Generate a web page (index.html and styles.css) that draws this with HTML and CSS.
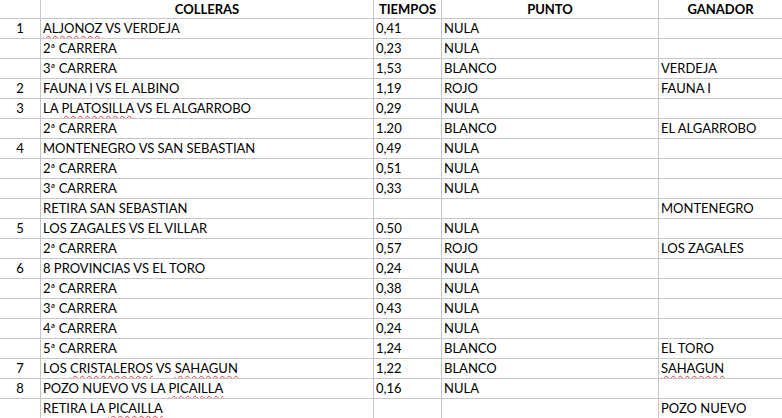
FILE: index.html
```html
<!DOCTYPE html>
<html>
<head>
<meta charset="utf-8">
<link rel="stylesheet" href="styles.css">
</head>
<body>
<div class="sheet">
  <div class="c"></div><div class="c h">COLLERAS</div><div class="c h">TIEMPOS</div><div class="c h">PUNTO</div><div class="c h">GANADOR</div>

  <div class="c n">1</div><div class="c"><span class="sp">ALJONOZ</span> VS VERDEJA</div><div class="c">0,41</div><div class="c">NULA</div><div class="c"></div>
  <div class="c n"></div><div class="c">2ª CARRERA</div><div class="c">0,23</div><div class="c">NULA</div><div class="c"></div>
  <div class="c n"></div><div class="c">3ª CARRERA</div><div class="c">1,53</div><div class="c">BLANCO</div><div class="c">VERDEJA</div>
  <div class="c n">2</div><div class="c">FAUNA I VS EL ALBINO</div><div class="c">1,19</div><div class="c">ROJO</div><div class="c">FAUNA I</div>
  <div class="c n">3</div><div class="c">LA <span class="sp">PLATOSILLA</span> VS EL ALGARROBO</div><div class="c">0,29</div><div class="c">NULA</div><div class="c"></div>
  <div class="c n"></div><div class="c">2ª CARRERA</div><div class="c">1.20</div><div class="c">BLANCO</div><div class="c">EL ALGARROBO</div>
  <div class="c n">4</div><div class="c">MONTENEGRO VS SAN SEBASTIAN</div><div class="c">0,49</div><div class="c">NULA</div><div class="c"></div>
  <div class="c n"></div><div class="c">2ª CARRERA</div><div class="c">0,51</div><div class="c">NULA</div><div class="c"></div>
  <div class="c n"></div><div class="c">3ª CARRERA</div><div class="c">0,33</div><div class="c">NULA</div><div class="c"></div>
  <div class="c n"></div><div class="c">RETIRA SAN SEBASTIAN</div><div class="c"></div><div class="c"></div><div class="c">MONTENEGRO</div>
  <div class="c n">5</div><div class="c">LOS ZAGALES VS EL VILLAR</div><div class="c">0.50</div><div class="c">NULA</div><div class="c"></div>
  <div class="c n"></div><div class="c">2ª CARRERA</div><div class="c">0,57</div><div class="c">ROJO</div><div class="c">LOS ZAGALES</div>
  <div class="c n">6</div><div class="c">8 PROVINCIAS VS EL TORO</div><div class="c">0,24</div><div class="c">NULA</div><div class="c"></div>
  <div class="c n"></div><div class="c">2ª CARRERA</div><div class="c">0,38</div><div class="c">NULA</div><div class="c"></div>
  <div class="c n"></div><div class="c">3ª CARRERA</div><div class="c">0,43</div><div class="c">NULA</div><div class="c"></div>
  <div class="c n"></div><div class="c">4ª CARRERA</div><div class="c">0,24</div><div class="c">NULA</div><div class="c"></div>
  <div class="c n"></div><div class="c">5ª CARRERA</div><div class="c">1,24</div><div class="c">BLANCO</div><div class="c">EL TORO</div>
  <div class="c n">7</div><div class="c">LOS <span class="sp">CRISTALEROS</span> VS <span class="sp">SAHAGUN</span></div><div class="c">1,22</div><div class="c">BLANCO</div><div class="c"><span class="sp">SAHAGUN</span></div>
  <div class="c n">8</div><div class="c">POZO NUEVO VS LA <span class="sp">PICAILLA</span></div><div class="c">0,16</div><div class="c">NULA</div><div class="c"></div>
  <div class="c n"></div><div class="c">RETIRA LA <span class="sp">PICAILLA</span></div><div class="c"></div><div class="c"></div><div class="c">POZO NUEVO</div>
</div>
</body>
</html>
```
FILE: styles.css
```css
html, body {
  margin: 0;
  padding: 0;
  background: #ffffff;
}
.sheet {
  display: grid;
  grid-template-columns: 40px 332px 67px 216px 1fr;
  grid-template-rows: 18px;
  grid-auto-rows: 19px;
  gap: 1px;
  background: #c6c6c6;
  font-family: Lato, "Liberation Sans", sans-serif;
  font-size: 13px;
  color: #000;
  height: 418px;
  overflow: hidden;
}
.c {
  background: #fff;
  padding: 0 2px;
  line-height: 19px;
  white-space: nowrap;
  overflow: hidden;
}
.h {
  font-weight: bold;
  text-align: center;
  line-height: 18px;
}
.n {
  text-align: center;
}
.sp {
  text-decoration: underline wavy #e63c3c;
  text-decoration-thickness: 1px;
  text-underline-offset: 2px;
  text-decoration-skip-ink: none;
}
```
